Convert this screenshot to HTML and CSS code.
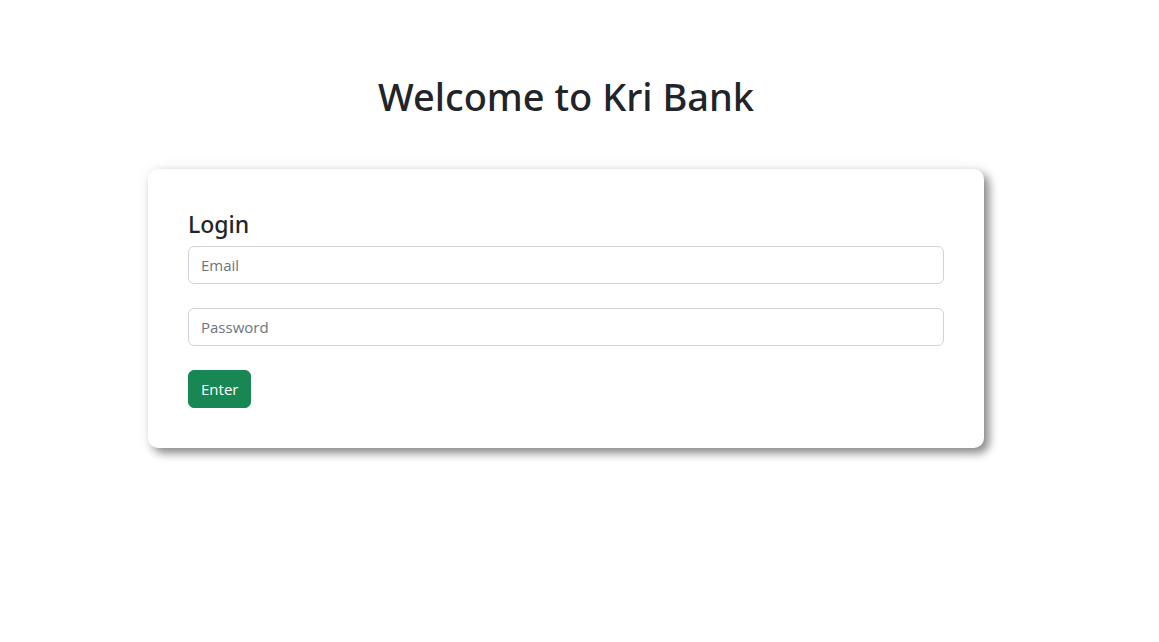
FILE: index.html
```
<!DOCTYPE html>
<html lang="en">
<head>
  <meta charset="utf-8">
  <meta name="viewport" content="width=device-width, initial-scale=1">
  <title>Kri Bank</title>
  <link rel="stylesheet" href="styles.css">
</head>
<body class="page">
  <main class="content">
    <h1 class="title">Welcome to Kri Bank</h1>
    <form class="card">
      <h2 class="card-title">Login</h2>
      <div class="fields">
        <input class="field" type="email" placeholder="Email" aria-label="Email">
        <input class="field" type="password" placeholder="Password" aria-label="Password">
        <button class="button" type="submit">Enter</button>
      </div>
    </form>
  </main>
</body>
</html>
```
FILE: styles.css
```
* {
  box-sizing: border-box;
}

.page {
  margin: 0;
  padding: 72px 27px 72px 0;
  background: #fff;
  color: #212529;
  font-family: "Open Sans", "Noto Sans", sans-serif;
  font-size: 15px;
  line-height: 24px;
}

.content {
  max-width: 836px;
  margin: 0 auto;
}

.title,
.card-title {
  font-family: "Noto Sans", "Open Sans", sans-serif;
  font-weight: 500;
}

.title {
  margin: 0 0 48px;
  font-size: 38px;
  line-height: 49px;
  text-align: center;
}

.card {
  padding: 40px;
  border-radius: 10px;
  background: #fff;
  box-shadow: 5px 5px 10px #888, 0 0 16px rgba(0, 0, 0, 0.06);
}

.card-title {
  margin: 0 0 6px;
  font-size: 23px;
  line-height: 31px;
}

.fields {
  display: flex;
  flex-direction: column;
  align-items: flex-start;
  gap: 24px;
}

.field {
  width: 100%;
  padding: 6px 12px;
  border: 1px solid #ced4da;
  border-radius: 6px;
  background: #fff;
  color: #212529;
  font: inherit;
}

.field::placeholder {
  color: #6c757d;
  opacity: 1;
}

.button {
  padding: 6px 12px;
  border: 1px solid #198754;
  border-radius: 6px;
  background: #198754;
  color: #fff;
  font: inherit;
  cursor: pointer;
}
```
